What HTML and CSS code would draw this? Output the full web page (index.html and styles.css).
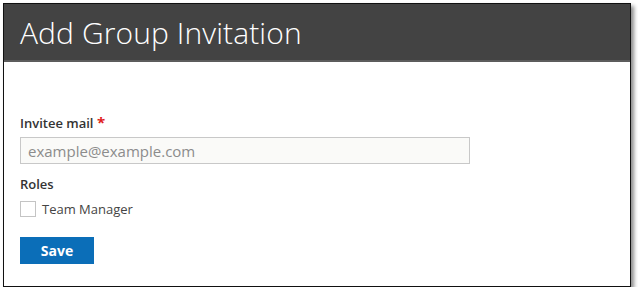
FILE: index.html
```html
<!DOCTYPE html>
<html lang="en">
<head>
    <meta charset="UTF-8">
    <meta name="viewport" content="width=device-width, initial-scale=1.0">
    <title>Add Group Invitation</title>
    <link rel="stylesheet" href="styles.css">
</head>
<body>
    <div class="dialog">
        <div class="dialog-header">
            <h1>Add Group Invitation</h1>
        </div>
        <form class="dialog-body">
            <label class="field-label" for="mail">Invitee mail <span class="required">*</span></label>
            <input id="mail" class="text-input" type="text" placeholder="example@example.com">

            <div class="field-label roles">Roles</div>
            <label class="check-row">
                <input type="checkbox">
                <span>Team Manager</span>
            </label>

            <button type="button" class="save-btn">Save</button>
        </form>
    </div>
</body>
</html>
```

FILE: styles.css
```css
body {
    margin: 0;
    background: #fff;
    font-family: 'Open Sans', 'Liberation Sans', sans-serif;
    color: #333;
}
.dialog {
    margin: 3px 0 0 3px;
    width: 626px;
    height: 282px;
    border: 1px solid #111;
    box-shadow: 3px 3px 4px rgba(0, 0, 0, 0.45);
    background: #fff;
    display: flex;
    flex-direction: column;
}
.dialog-header {
    background: #434343;
    border-bottom: 2px solid #5c5c5c;
    height: 56px;
    padding: 0 16px;
    display: flex;
    align-items: center;
}
.dialog-header h1 {
    margin: 0;
    color: #fff;
    font-weight: 300;
    font-size: 30px;
    letter-spacing: 0.1px;
}
.dialog-body {
    padding: 51px 16px 0 16px;
    display: flex;
    flex-direction: column;
    align-items: flex-start;
}
.field-label {
    font-size: 13px;
    font-weight: 600;
    color: #333;
    line-height: 18px;
}
.required {
    color: #e02020;
    font-size: 15px;
    font-weight: 700;
}
.text-input {
    margin-top: 5px;
    width: 450px;
    height: 27px;
    box-sizing: border-box;
    border: 1px solid #c8c8c8;
    background: #fafaf8;
    padding: 0 7px;
    font-family: 'Open Sans', 'Liberation Sans', sans-serif;
    font-size: 15px;
    color: #333;
}
.text-input::placeholder {
    color: #8c8c8c;
}
.roles {
    margin-top: 11px;
}
.check-row {
    margin-top: 7px;
    display: flex;
    align-items: center;
    gap: 6px;
    font-size: 13px;
    color: #444;
}
.check-row input {
    appearance: none;
    margin: 0;
    width: 16px;
    height: 16px;
    border: 1px solid #c4c4c4;
    background: #fff;
}
.save-btn {
    margin-top: 19px;
    width: 74px;
    height: 27px;
    border: none;
    background: #0b6eb8;
    color: #fff;
    font-family: 'Open Sans', 'Liberation Sans', sans-serif;
    font-weight: 700;
    font-size: 14px;
    padding: 0;
}
```
